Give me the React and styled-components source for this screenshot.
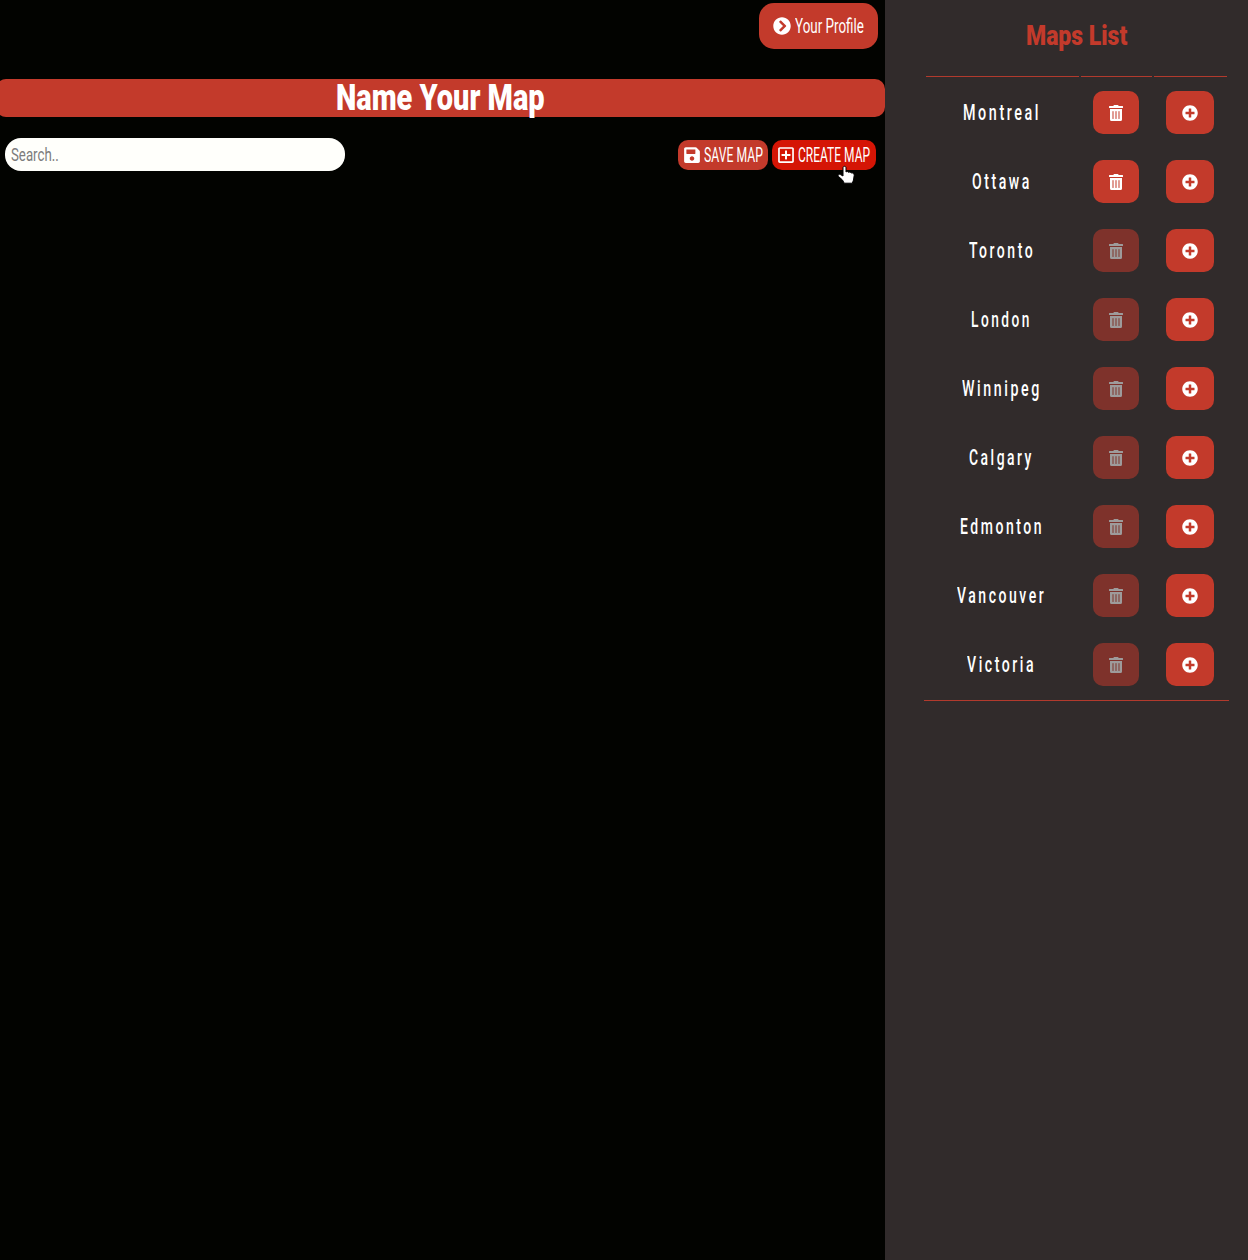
import React, { useLayoutEffect, useRef, useState } from "react";
import styled, { createGlobalStyle, css } from "styled-components";
import { FaChevronCircleRight, FaPlusCircle, FaSave, FaRegPlusSquare, FaTrashAlt } from "react-icons/fa";

const GlobalStyle = createGlobalStyle`
  * { box-sizing: border-box; }
  html, body { margin: 0; background: #020300; }
  body { font-family: Roboto, "Liberation Sans", sans-serif; overflow: hidden; }
  button { font-family: inherit; cursor: pointer; }
`;

const FitBox = styled.span`
  display: inline-flex;
  flex: none;
  width: ${(p) => p.$width}px;
  white-space: nowrap;
`;

const FitText = styled.span`
  display: inline-block;
  flex: none;
  transform-origin: 0 50%;
`;

/* Condenses its text horizontally until it fills the given width. */
function Condensed({ width, children }) {
  const ref = useRef(null);
  const [scale, setScale] = useState(0.6);
  useLayoutEffect(() => {
    setScale(width / ref.current.offsetWidth);
  }, [width, children]);
  return (
    <FitBox $width={width}>
      <FitText ref={ref} style={{ transform: `scaleX(${scale})` }}>{children}</FitText>
    </FitBox>
  );
}

const Page = styled.div`
  display: grid;
  grid-template-columns: 885px 363px;
  height: 1260px;
  color: #fff;
`;

const Main = styled.main`
  display: flex;
  flex-direction: column;
  background: #020300;
`;

const TopBar = styled.header`
  display: flex;
  justify-content: flex-end;
  height: 79px;
  padding: 3px 7px 0 0;
`;

const redButton = css`
  display: flex;
  align-items: center;
  border: 0;
  color: #fff;
  background: #c33a2b;
`;

const ProfileButton = styled.button`
  ${redButton}
  width: 119px;
  height: 46px;
  padding: 0 0 0 14px;
  gap: 4px;
  border-radius: 15px;
  font-size: 21px;
`;

const Banner = styled.h1`
  display: flex;
  justify-content: center;
  align-items: center;
  height: 38px;
  margin: 0 0 0 -4px;
  border-radius: 10px;
  background: #c33a2b;
  font-size: 36px;
  font-weight: 900;
  line-height: 38px;
`;

const Toolbar = styled.div`
  display: flex;
  align-items: center;
  gap: 4px;
  margin-top: 21px;
  padding: 0 9.5px 0 5px;
`;

const SearchBox = styled.div`
  display: flex;
  align-items: center;
  width: 340px;
  height: 33px;
  margin-right: auto;
  padding-left: 6px;
  border-radius: 16px;
  background: #fffffb;
  color: #7c7c7c;
  font-size: 18.5px;
`;

const ToolButton = styled.button`
  ${redButton}
  width: ${(p) => p.$width}px;
  height: 30px;
  gap: 3px;
  padding: 0 0 0 5px;
  border-radius: 10px;
  background: ${(p) => (p.$active ? "#d51505" : "#c33a2b")};
  font-size: 20.5px;
`;

const Cursor = styled.svg`
  position: absolute;
  left: 837px;
  top: 165px;
`;

const Sidebar = styled.aside`
  display: flex;
  flex-direction: column;
  padding: 0 19px 0 39px;
  background: #312b2b;
`;

const SidebarTitle = styled.h2`
  display: flex;
  justify-content: center;
  align-items: center;
  height: 70px;
  margin: 0 0 2px;
  color: #c33a2b;
  font-size: 28px;
  font-weight: 900;
`;

const columns = css`
  display: grid;
  grid-template-columns: 153px 71px 73px;
  column-gap: 2px;
  padding: 0 2px;
`;

const HeadRule = styled.div`
  ${columns}
  margin-top: 4px;
`;

const Rule = styled.span`
  height: 1px;
  background: #b23a2d;
`;

const List = styled.div`
  height: 624px;
  padding-top: 1px;
  border-bottom: 1px solid #b23a2d;
`;

const Row = styled.div`
  ${columns}
  height: 69px;
  align-items: center;
`;

const City = styled.span`
  display: flex;
  justify-content: center;
  padding-right: 1.5px;
  font-size: 22px;
  font-weight: 500;
  letter-spacing: 4px;
`;

const IconButton = styled.button`
  ${redButton}
  justify-content: center;
  width: ${(p) => p.$width}px;
  height: 43px;
  margin-left: 12px;
  padding: 0;
  border-radius: 10px;
  opacity: ${(p) => (p.disabled ? 0.53 : 1)};
`;

const cities = [
  { name: "Montreal", width: 78, owned: true },
  { name: "Ottawa", width: 60, owned: true },
  { name: "Toronto", width: 66 },
  { name: "London", width: 61 },
  { name: "Winnipeg", width: 80 },
  { name: "Calgary", width: 65 },
  { name: "Edmonton", width: 84 },
  { name: "Vancouver", width: 89 },
  { name: "Victoria", width: 69 },
];

export default function App() {
  return (
    <Page>
      <GlobalStyle />
      <Main>
        <TopBar>
          <ProfileButton>
            <FaChevronCircleRight size={18} />
            <Condensed width={69}>Your Profile</Condensed>
          </ProfileButton>
        </TopBar>
        <Banner><Condensed width={209}>Name Your Map</Condensed></Banner>
        <Toolbar>
          <SearchBox><Condensed width={48}>Search..</Condensed></SearchBox>
          <ToolButton $width={90}>
            <FaSave size={18} />
            <Condensed width={59}>SAVE MAP</Condensed>
          </ToolButton>
          <ToolButton $width={103.5} $active>
            <FaRegPlusSquare size={18} />
            <Condensed width={72}>CREATE MAP</Condensed>
          </ToolButton>
        </Toolbar>
        <Cursor width="18" height="20" viewBox="0 0 18 20" aria-hidden="true">
          <path
            d="M6 2.8C6 .8 9 .8 9 2.8V7c1-.8 2.2-.5 2.6.4 1-.6 2.1-.3 2.5.6 1.5-.5 3.1.4 3.1 2.3l-.7 4.7-1.2 3.2H7.2L5.5 15 1.3 11.3c-.8-1.6.8-2.6 2.2-1.7L6 11z"
            fill="#fff"
            stroke="#000"
            strokeWidth="1"
          />
        </Cursor>
      </Main>
      <Sidebar>
        <SidebarTitle><Condensed width={101}>Maps List</Condensed></SidebarTitle>
        <HeadRule><Rule /><Rule /><Rule /></HeadRule>
        <List>
          {cities.map((city) => (
            <Row key={city.name}>
              <City><Condensed width={city.width}>{city.name}</Condensed></City>
              <IconButton $width={46} disabled={!city.owned} aria-label={`Delete ${city.name}`}>
                <FaTrashAlt size={16} />
              </IconButton>
              <IconButton $width={48} aria-label={`Add ${city.name}`}>
                <FaPlusCircle size={16} />
              </IconButton>
            </Row>
          ))}
        </List>
      </Sidebar>
    </Page>
  );
}
